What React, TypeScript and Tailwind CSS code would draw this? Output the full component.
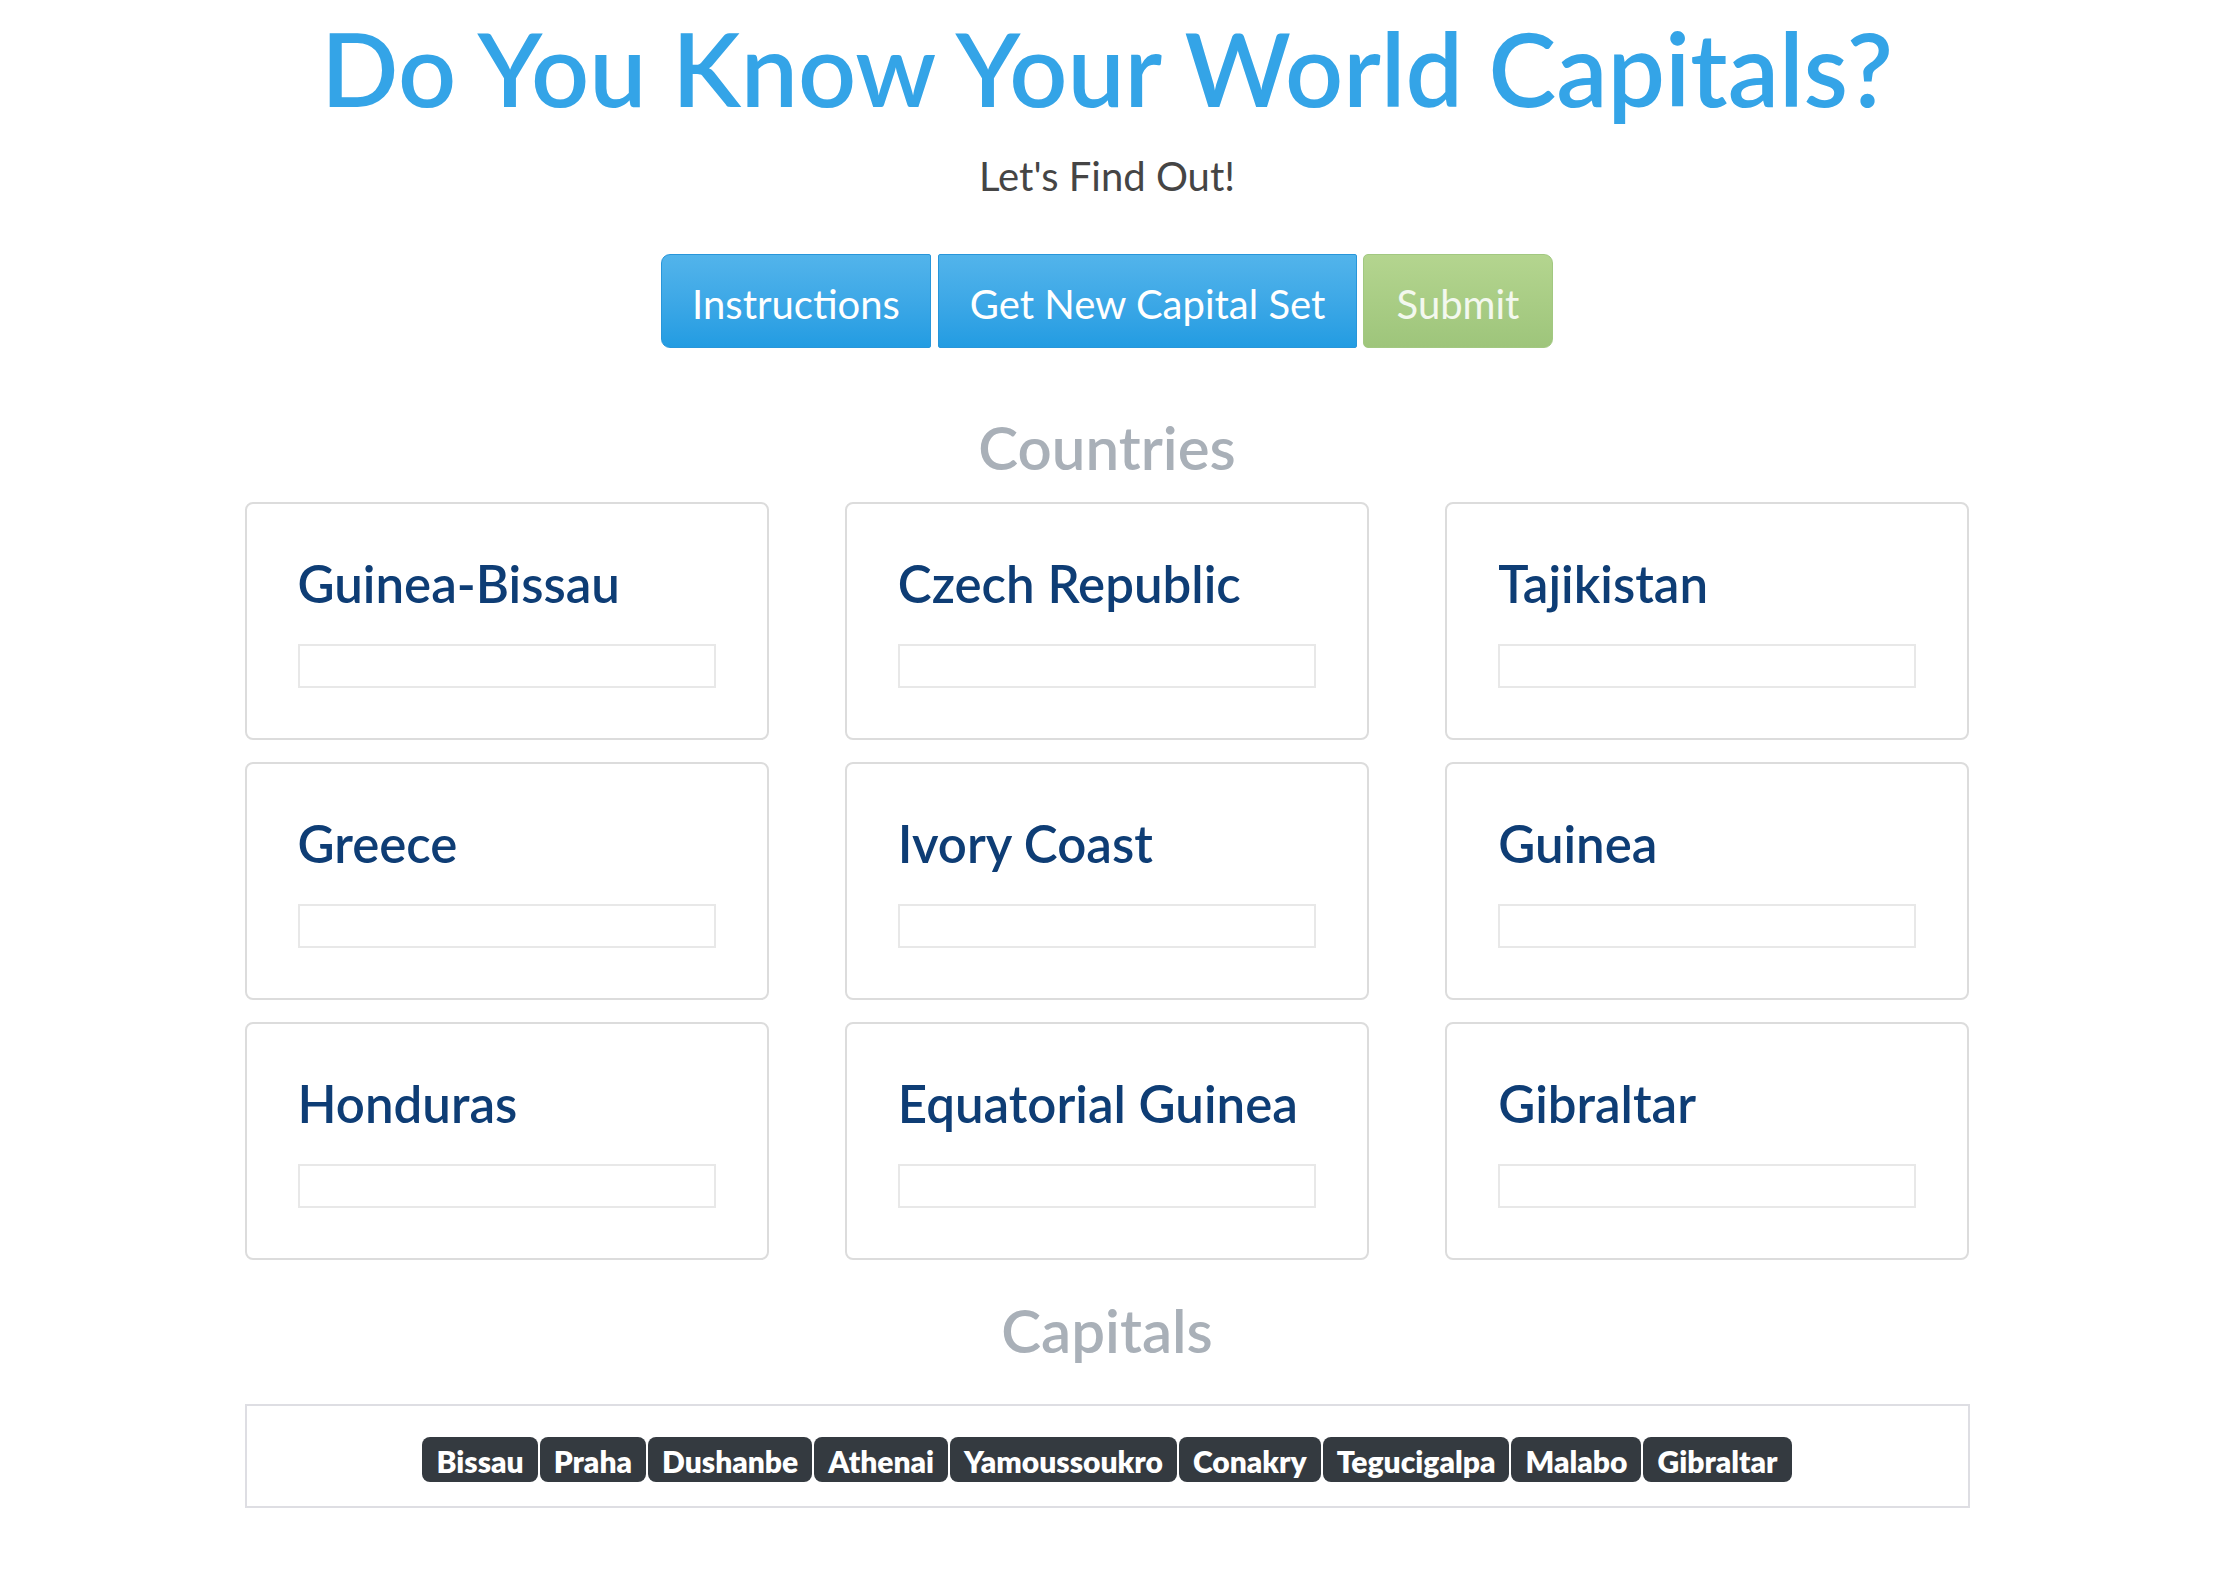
import React from 'react';

const countries = [
  'Guinea-Bissau',
  'Czech Republic',
  'Tajikistan',
  'Greece',
  'Ivory Coast',
  'Guinea',
  'Honduras',
  'Equatorial Guinea',
  'Gibraltar',
];

const capitals = [
  'Bissau',
  'Praha',
  'Dushanbe',
  'Athenai',
  'Yamoussoukro',
  'Conakry',
  'Tegucigalpa',
  'Malabo',
  'Gibraltar',
];

function CountryCard({ name }: { name: string }) {
  return (
    <div className="h-[238px] border-2 border-[#dcdcdc] rounded-[8px] px-[51px] pt-[54px]">
      <h3 className="text-[51px] leading-none font-semibold text-[#0e3d75]">{name}</h3>
      <input
        type="text"
        className="mt-[35px] block w-full h-[44px] border-2 border-[#e8e8e8] outline-none"
      />
    </div>
  );
}

export default function App() {
  return (
    <div className="min-h-screen bg-white font-['Lato','Liberation_Sans',sans-serif]">
      <div className="w-[1725px] mx-auto pb-[60px]">
        {/* Header */}
        <h1 className="pt-[17px] text-center text-[102px] leading-none font-semibold text-[#34a4e7]">
          Do You Know Your World Capitals?
        </h1>
        <p className="mt-[37px] text-center text-[40px] leading-none text-[#454545]">Let's Find Out!</p>

        <div className="mt-[58px] flex justify-center">
          <button className="w-[270px] h-[94px] flex items-center justify-center pt-[5px] text-[40px] leading-none text-white bg-linear-to-b from-[#52b4eb] to-[#229ce2] border border-[#2896da] rounded-l-[9px] rounded-r-[2px]">
            Instructions
          </button>
          <button className="ml-[7px] w-[419px] h-[94px] flex items-center justify-center pt-[5px] text-[40px] leading-none text-white bg-linear-to-b from-[#52b4eb] to-[#229ce2] border border-[#2896da] rounded-[2px]">
            Get New Capital Set
          </button>
          <button className="ml-[6px] w-[190px] h-[94px] flex items-center justify-center pt-[5px] text-[40px] leading-none text-[#f3f8ee] bg-linear-to-b from-[#b4d58f] to-[#9ec57b] border border-[#a2c881] rounded-l-[5px] rounded-r-[9px]">
            Submit
          </button>
        </div>

        {/* Countries */}
        <h2 className="mt-[69px] text-center text-[60px] leading-none font-semibold text-[#a9b0b8]">Countries</h2>
        <div className="mt-[25px] grid grid-cols-3 gap-x-[76px] gap-y-[22px]">
          {countries.map((c) => (
            <CountryCard key={c} name={c} />
          ))}
        </div>

        {/* Capitals */}
        <h2 className="mt-[40px] text-center text-[60px] leading-none font-semibold text-[#a9b0b8]">Capitals</h2>
        <div className="mt-[44px] border-2 border-[#dedee3] pt-[31px] pb-[24px] flex justify-center gap-[2px]">
          {capitals.map((c) => (
            <span
              key={c}
              className="h-[45px] px-[14px] pt-[3px] flex items-center rounded-[8px] bg-[#343a40] text-white text-[30px] leading-none font-extrabold"
            >
              {c}
            </span>
          ))}
        </div>
      </div>
    </div>
  );
}
